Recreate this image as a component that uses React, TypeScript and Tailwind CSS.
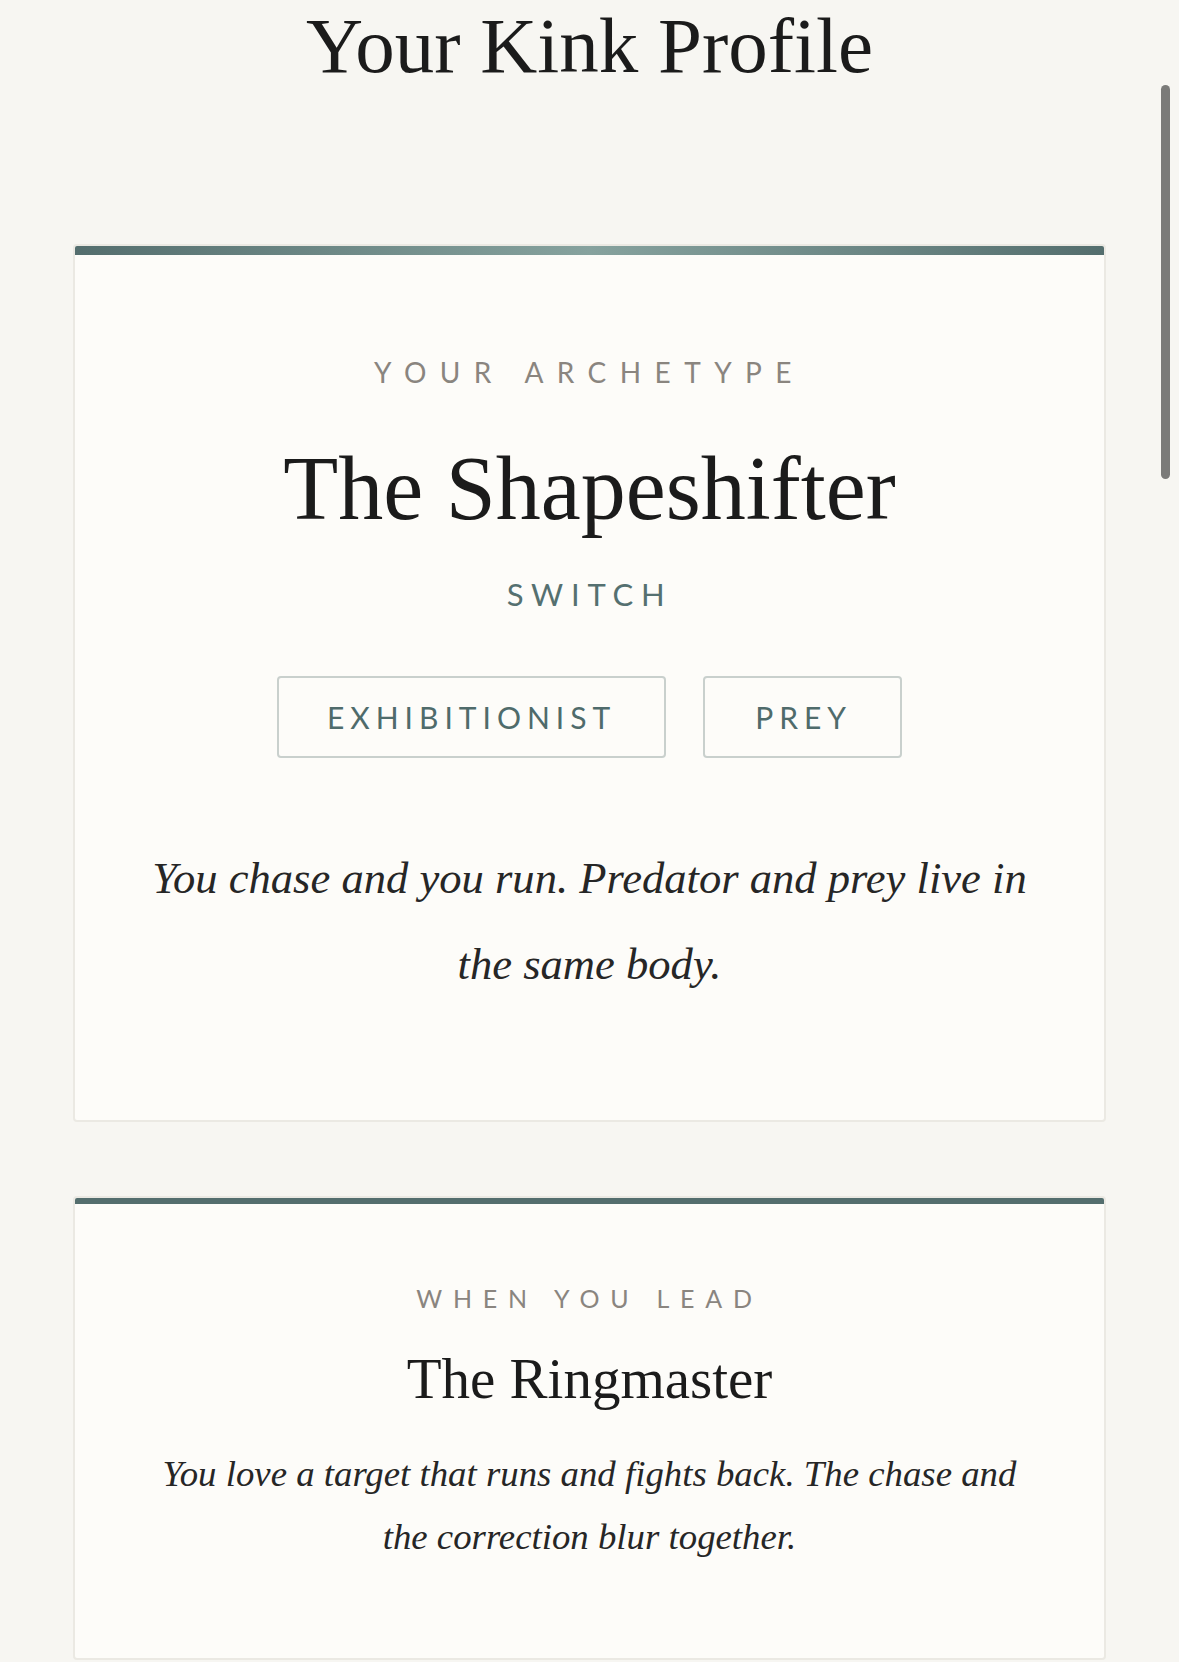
import React from "react";

const serif = { fontFamily: '"Liberation Serif", "Times New Roman", serif' } as const;
const sans = { fontFamily: 'Lato, "Open Sans", sans-serif' } as const;

export default function App() {
  return (
    <div className="relative min-h-[1662px] w-full overflow-hidden bg-[#f7f6f2]">
      <div className="flex flex-col items-center pt-[7px]">
        <h1 style={serif} className="text-[79px] leading-[78px] font-normal text-[#1b1b1b]">
          Your Kink Profile
        </h1>
      </div>

      <div className="mx-[73px] mt-[159px] flex flex-col gap-[74px]">
        {/* Card 1 */}
        <div className="overflow-hidden rounded-[4px] border-2 border-[#ebe9e3] bg-[#fdfcf9]">
          <div className="h-[9px] bg-[linear-gradient(90deg,#546e6e_0%,#86a29e_50%,#546e6e_100%)]" />
          <div className="flex flex-col items-center px-[60px] pt-[103px] pb-[113px] text-center">
            <div style={sans} className="text-[28px] leading-[28px] tracking-[0.48em] text-[#8a857f]">
              YOUR ARCHETYPE
            </div>
            <h2 style={serif} className="mt-[58px] text-[90px] leading-[90px] font-normal text-[#1b1b1b]">
              The Shapeshifter
            </h2>
            <div style={sans} className="mt-[45px] text-[31px] leading-[31px] tracking-[0.25em] text-[#557070]">
              SWITCH
            </div>
            <div className="mt-[66px] flex gap-[37px]">
              <div
                style={sans}
                className="flex h-[82px] items-center rounded-[4px] border-2 border-[#c9d0cd] pl-[48px] pr-[48px] text-[30px] leading-[30px] tracking-[0.2em] text-[#4f6b6b]"
              >
                EXHIBITIONIST
              </div>
              <div
                style={sans}
                className="flex h-[82px] items-center rounded-[4px] border-2 border-[#c9d0cd] pl-[50px] pr-[48px] text-[30px] leading-[30px] tracking-[0.2em] text-[#4f6b6b]"
              >
                PREY
              </div>
            </div>
            <p style={serif} className="mt-[77px] text-[44.6px] leading-[86px] italic text-[#262626]">
              You chase and you run. Predator and prey live in
              <br />
              the same body.
            </p>
          </div>
        </div>

        {/* Card 2 */}
        <div className="overflow-hidden rounded-[4px] border-2 border-[#ebe9e3] bg-[#fdfcf9]">
          <div className="h-[6px] bg-[#546e6e]" />
          <div className="flex flex-col items-center px-[60px] pt-[82px] pb-[90px] text-center">
            <div style={sans} className="text-[25px] leading-[25px] tracking-[0.43em] text-[#8a857f]">
              WHEN YOU LEAD
            </div>
            <h3 style={serif} className="mt-[39px] text-[57px] leading-[57px] font-normal text-[#1b1b1b]">
              The Ringmaster
            </h3>
            <p style={serif} className="mt-[35px] text-[36.8px] leading-[63px] italic text-[#262626]">
              You love a target that runs and fights back. The chase and
              <br />
              the correction blur together.
            </p>
          </div>
        </div>
      </div>

      {/* overlay scrollbar thumb */}
      <div className="absolute left-[1161px] top-[85px] h-[394px] w-[9px] rounded-full bg-[#7b7b79]" />
    </div>
  );
}
